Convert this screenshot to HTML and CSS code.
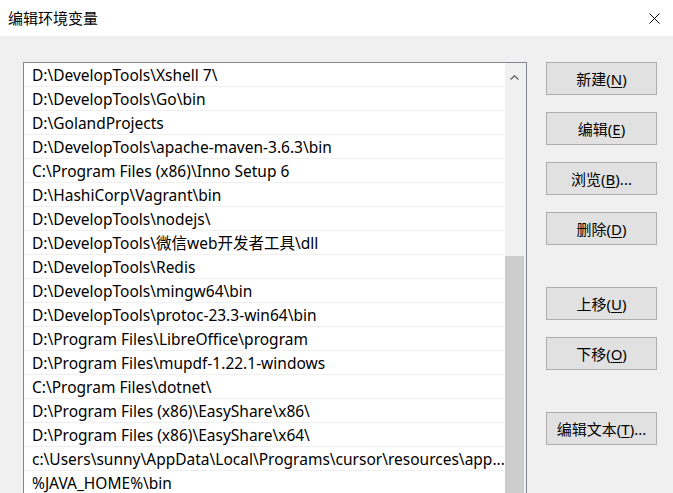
FILE: index.html
```html
<!DOCTYPE html>
<html lang="zh-CN">
<head>
<meta charset="utf-8">
<title>编辑环境变量</title>
<link rel="stylesheet" href="styles.css">
</head>
<body>
<div class="dialog">
  <div class="titlebar">
    <span class="title">编辑环境变量</span>
    <span class="close" aria-label="关闭">
      <svg width="11" height="11" viewBox="0 0 11 11"><path d="M0.5 0.5 L10.5 10.5 M10.5 0.5 L0.5 10.5" stroke="#000" stroke-width="1" fill="none"/></svg>
    </span>
  </div>
  <div class="content">
    <div class="listbox">
      <ul class="rows">
        <li>D:\DevelopTools\Xshell 7\</li>
        <li>D:\DevelopTools\Go\bin</li>
        <li>D:\GolandProjects</li>
        <li>D:\DevelopTools\apache-maven-3.6.3\bin</li>
        <li>C:\Program Files (x86)\Inno Setup 6</li>
        <li>D:\HashiCorp\Vagrant\bin</li>
        <li>D:\DevelopTools\nodejs\</li>
        <li>D:\DevelopTools\微信web开发者工具\dll</li>
        <li>D:\DevelopTools\Redis</li>
        <li>D:\DevelopTools\mingw64\bin</li>
        <li>D:\DevelopTools\protoc-23.3-win64\bin</li>
        <li>D:\Program Files\LibreOffice\program</li>
        <li>D:\Program Files\mupdf-1.22.1-windows</li>
        <li>C:\Program Files\dotnet\</li>
        <li>D:\Program Files (x86)\EasyShare\x86\</li>
        <li>D:\Program Files (x86)\EasyShare\x64\</li>
        <li>c:\Users\sunny\AppData\Local\Programs\cursor\resources\app...</li>
        <li>%JAVA_HOME%\bin</li>
      </ul>
      <div class="scrollbar">
        <div class="arrow">
          <svg width="9" height="5" viewBox="0 0 9 5"><path d="M0.5 4.5 L4.5 0.8 L8.5 4.5" stroke="#606060" stroke-width="1.3" fill="none"/></svg>
        </div>
        <div class="track"></div>
        <div class="thumb"></div>
      </div>
    </div>
    <div class="buttons">
      <div class="group">
        <button class="btn">新建(<u>N</u>)</button>
        <button class="btn">编辑(<u>E</u>)</button>
        <button class="btn">浏览(<u>B</u>)...</button>
        <button class="btn">删除(<u>D</u>)</button>
      </div>
      <div class="group">
        <button class="btn">上移(<u>U</u>)</button>
        <button class="btn">下移(<u>O</u>)</button>
      </div>
      <div class="group">
        <button class="btn">编辑文本(<u>T</u>)...</button>
      </div>
    </div>
  </div>
</div>
</body>
</html>
```
FILE: styles.css
```css
* { box-sizing: border-box; }
html, body {
  margin: 0;
  padding: 0;
  width: 673px;
  height: 493px;
  overflow: hidden;
  background: #f0f0f0;
  font-family: "Noto Sans", "Noto Sans CJK SC", sans-serif;
  font-size: 15px;
  color: #000;
}
.dialog {
  width: 673px;
  height: 493px;
  display: flex;
  flex-direction: column;
  overflow: hidden;
}
.titlebar {
  height: 36px;
  background: #fff;
  display: flex;
  align-items: center;
  justify-content: space-between;
  padding: 0 13px 0 8px;
  flex: none;
}
.title {
  font-family: "Noto Sans CJK SC", sans-serif;
  font-size: 15px;
  line-height: 20px;
}
.close { display: flex; }
.content {
  display: flex;
  align-items: flex-start;
  padding: 26px 0 0 23px;
  gap: 19px;
  min-height: 0;
}
.listbox {
  width: 504px;
  height: 440px;
  border: 1px solid #828790;
  border-bottom: none;
  background: #fff;
  display: flex;
  flex: none;
}
.rows {
  list-style: none;
  margin: 0;
  padding: 0;
  width: 480px;
  margin-right: 1px;
}
.rows li {
  height: 24px;
  border-bottom: 1px solid #f0f0f0;
  padding: 2px 0 0 8px;
  line-height: 21px;
  font-size: 15.5px;
  white-space: nowrap;
  overflow: hidden;
}
.scrollbar {
  width: 21px;
  background: #f0f0f0;
  display: flex;
  flex-direction: column;
}
.arrow {
  height: 17px;
  display: flex;
  justify-content: center;
  align-items: flex-end;
  padding-right: 2px;
}
.track { height: 176px; }
.thumb {
  flex: 1;
  background: #cdcdcd;
  margin-right: 2px;
}
.buttons {
  display: flex;
  flex-direction: column;
  gap: 42px;
}
.group {
  display: flex;
  flex-direction: column;
  gap: 17px;
}
.btn {
  width: 111px;
  height: 33px;
  background: #e1e1e1;
  border: 1px solid #adadad;
  border-radius: 0;
  font-family: "Noto Sans", "Noto Sans CJK SC", sans-serif;
  font-size: 15px;
  color: #000;
  padding: 0;
  line-height: 20px;
}
.btn u { text-underline-offset: 2px; }
```
